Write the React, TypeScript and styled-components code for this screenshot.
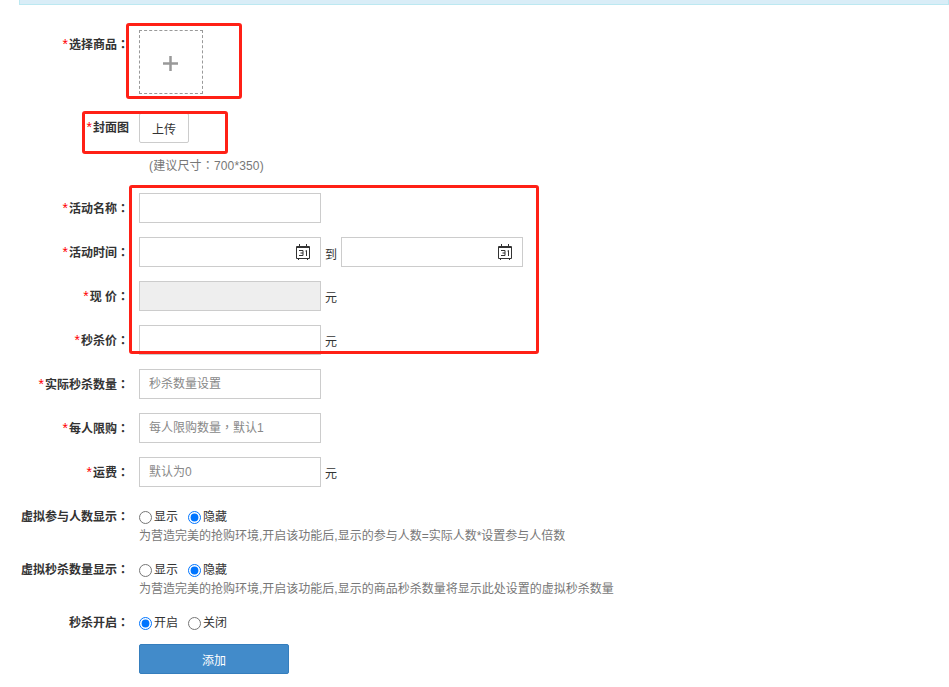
import React from 'react';
import styled, { createGlobalStyle } from 'styled-components';

const GlobalStyle = createGlobalStyle`
  html, body {
    margin: 0;
    padding: 0;
    background: #fff;
  }
  body {
    font-family: 'Liberation Sans', 'Noto Sans CJK SC', sans-serif;
    font-size: 12px;
    color: #333;
  }
`;

const Page = styled.div`
  position: relative;
  width: 949px;
  height: 687px;
  overflow: hidden;
`;

const Banner = styled.div`
  height: 4px;
  margin-left: 19px;
  background: #d9edf7;
  border: 1px solid #bce8f1;
  border-top: 0;
  box-sizing: content-box;
`;

const Form = styled.form`
  display: flex;
  flex-direction: column;
  padding-top: 25px;
`;

const Row = styled.div<{ $h: number; $mb?: number }>`
  display: flex;
  align-items: flex-start;
  height: ${(p) => p.$h}px;
  margin-bottom: ${(p) => p.$mb ?? 14}px;
`;

const Label = styled.label<{ $top?: number }>`
  flex: 0 0 129px;
  margin-right: 10px;
  padding-top: ${(p) => p.$top ?? 8}px;
  text-align: right;
  font-weight: bold;
  line-height: 16px;
  color: #333;
  white-space: nowrap;
`;

const Star = styled.span`
  display: inline-block;
  width: 6px;
  margin-right: 1px;
  margin-left: -1px;
  color: #f00;
  font-weight: normal;
  font-size: 14px;
  line-height: 12px;
`;

const Colon = styled.span`
  font-family: 'Liberation Sans', 'Noto Sans CJK TC', sans-serif;
`;

const Picker = styled.div`
  box-sizing: border-box;
  width: 64px;
  height: 64px;
  padding: 3px 2px 0 0;
  border: 1px dashed #999;
  display: flex;
  align-items: center;
  justify-content: center;
`;

const UploadButton = styled.button`
  width: 50px;
  height: 30px;
  padding: 0;
  background: #fff;
  border: 1px solid #ccc;
  border-radius: 2px;
  font: inherit;
  color: #333;
`;

const Hint = styled.div`
  margin: 0 0 19px 149px;
  height: 16px;
  line-height: 16px;
  letter-spacing: 0.15px;
  color: #777;
`;

const InputWrap = styled.div`
  position: relative;
  width: 182px;
  height: 30px;
`;

const TextInput = styled.input<{ $disabled?: boolean }>`
  display: block;
  box-sizing: border-box;
  width: 182px;
  height: 30px;
  padding: 0 9px;
  border: 1px solid #ccc;
  outline: none;
  font: inherit;
  font-family: 'Liberation Sans', 'Noto Sans CJK TC', sans-serif;
  background: ${(p) => (p.$disabled ? '#eeeeee' : '#fff')};
  &::placeholder {
    color: #888;
    opacity: 1;
  }
`;

const CalendarIcon = styled.svg`
  position: absolute;
  right: 11px;
  top: 7px;
`;

const Unit = styled.span`
  margin-left: 4px;
  padding-top: 9px;
  line-height: 16px;
  color: #333;
`;

const DateUnit = styled(Unit)`
  margin: 0 4px;
  padding-top: 10px;
`;

const ChoiceColumn = styled.div`
  display: flex;
  flex-direction: column;
`;

const RadioRow = styled.div`
  display: flex;
  align-items: center;
  height: 16px;
  margin-top: 1px;
`;

const RadioLabel = styled.label`
  display: flex;
  align-items: center;
  margin-right: 10px;
  line-height: 16px;
  color: #333;
`;

const Radio = styled.input`
  width: 13px;
  height: 13px;
  margin: 0 2px 0 0;
`;

const Help = styled.div`
  margin-top: 3px;
  line-height: 16px;
  color: #777;
`;

const Submit = styled.button`
  width: 150px;
  height: 30px;
  margin-left: 139px;
  padding: 0;
  background: #428bca;
  border: 1px solid #357ebd;
  border-radius: 2px;
  color: #fff;
  font: inherit;
  font-size: 12px;
`;

const Highlight = styled.div<{ $x: number; $y: number; $w: number; $h: number }>`
  position: absolute;
  box-sizing: border-box;
  left: ${(p) => p.$x}px;
  top: ${(p) => p.$y}px;
  width: ${(p) => p.$w}px;
  height: ${(p) => p.$h}px;
  border: 3px solid #ff2016;
  border-radius: 3px;
  pointer-events: none;
`;

function Calendar() {
  return (
    <CalendarIcon width="14" height="16" viewBox="0 0 14 16" fill="none">
      <path d="M0.5 2.5h13v12h-13z" stroke="#333" />
      <path d="M1 3h12v1H1z" fill="#333" />
      <path d="M3.5 0v3M10.5 0v3" stroke="#333" />
      <path d="M2.5 14.5V16M11.5 14.5V16" stroke="#333" />
      <path d="M3 6.5h4v2.5H4.5M7 9v2.5H3" stroke="#333" />
      <path d="M9.5 7l1-.5V12" stroke="#333" />
    </CalendarIcon>
  );
}

function Required({ children, top, colon = true }: { children: React.ReactNode; top?: number; colon?: boolean }) {
  return (
    <Label $top={top}>
      <Star>*</Star>
      {children}
      {colon && <Colon>：</Colon>}
    </Label>
  );
}

export default function App() {
  return (
    <Page>
      <GlobalStyle />
      <Banner />
      <Form>
        <Row $h={64} $mb={19}>
          <Required top={7}>选择商品</Required>
          <Picker>
            <svg width="15" height="15" viewBox="0 0 15 15">
              <path d="M0 7.5h15M7.5 0v15" stroke="#999" strokeWidth="2.5" />
            </svg>
          </Picker>
        </Row>
        <Row $h={30} $mb={15}>
          <Required colon={false} top={7}>封面图</Required>
          <UploadButton type="button">上传</UploadButton>
        </Row>
        <Hint>
          (建议尺寸<Colon>：</Colon>700*350)
        </Hint>
        <Row $h={30}>
          <Required>活动名称</Required>
          <TextInput />
        </Row>
        <Row $h={30}>
          <Required>活动时间</Required>
          <InputWrap>
            <TextInput />
            <Calendar />
          </InputWrap>
          <DateUnit>到</DateUnit>
          <InputWrap>
            <TextInput />
            <Calendar />
          </InputWrap>
        </Row>
        <Row $h={30}>
          <Required>现 价</Required>
          <TextInput $disabled disabled />
          <Unit>元</Unit>
        </Row>
        <Row $h={30}>
          <Required>秒杀价</Required>
          <TextInput />
          <Unit>元</Unit>
        </Row>
        <Row $h={30}>
          <Required>实际秒杀数量</Required>
          <TextInput placeholder="秒杀数量设置" />
        </Row>
        <Row $h={30}>
          <Required>每人限购</Required>
          <TextInput placeholder="每人限购数量，默认1" />
        </Row>
        <Row $h={30} $mb={21}>
          <Required>运费</Required>
          <TextInput placeholder="默认为0" />
          <Unit>元</Unit>
        </Row>
        <Row $h={36} $mb={17}>
          <Label $top={1}>
            虚拟参与人数显示<Colon>：</Colon>
          </Label>
          <ChoiceColumn>
            <RadioRow>
              <RadioLabel>
                <Radio type="radio" name="a" />
                显示
              </RadioLabel>
              <RadioLabel>
                <Radio type="radio" name="a" defaultChecked />
                隐藏
              </RadioLabel>
            </RadioRow>
            <Help>为营造完美的抢购环境,开启该功能后,显示的参与人数=实际人数*设置参与人倍数</Help>
          </ChoiceColumn>
        </Row>
        <Row $h={36} $mb={17}>
          <Label $top={1}>
            虚拟秒杀数量显示<Colon>：</Colon>
          </Label>
          <ChoiceColumn>
            <RadioRow>
              <RadioLabel>
                <Radio type="radio" name="b" />
                显示
              </RadioLabel>
              <RadioLabel>
                <Radio type="radio" name="b" defaultChecked />
                隐藏
              </RadioLabel>
            </RadioRow>
            <Help>为营造完美的抢购环境,开启该功能后,显示的商品秒杀数量将显示此处设置的虚拟秒杀数量</Help>
          </ChoiceColumn>
        </Row>
        <Row $h={16} $mb={14}>
          <Label $top={1}>
            秒杀开启<Colon>：</Colon>
          </Label>
          <RadioRow>
            <RadioLabel>
              <Radio type="radio" name="c" defaultChecked />
              开启
            </RadioLabel>
            <RadioLabel>
              <Radio type="radio" name="c" />
              关闭
            </RadioLabel>
          </RadioRow>
        </Row>
        <Submit type="button">添加</Submit>
      </Form>
      <Highlight $x={126} $y={23} $w={116} $h={76} />
      <Highlight $x={82} $y={111} $w={146} $h={43} />
      <Highlight $x={129} $y={185} $w={410} $h={169} />
    </Page>
  );
}
